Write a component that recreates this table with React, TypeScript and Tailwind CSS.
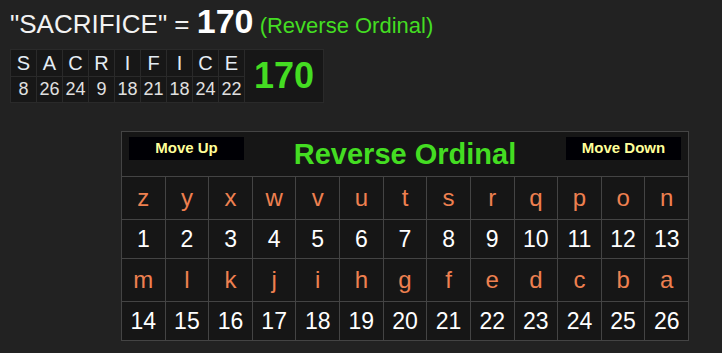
import React from 'react';

const word = [
  { ch: 'S', v: 8 },
  { ch: 'A', v: 26 },
  { ch: 'C', v: 24 },
  { ch: 'R', v: 9 },
  { ch: 'I', v: 18 },
  { ch: 'F', v: 21 },
  { ch: 'I', v: 18 },
  { ch: 'C', v: 24 },
  { ch: 'E', v: 22 },
];

const alphabet = 'zyxwvutsrqponmlkjihgfedcba'.split('');

// two halves of the cipher chart, 13 letters each
const halves = [alphabet.slice(0, 13), alphabet.slice(13)];

const App = () => {
  return (
    <div
      className="min-h-screen w-full bg-[#222222] px-[10px] pt-[3px] text-white"
      style={{ fontFamily: '"Liberation Sans", Arial, sans-serif' }}
    >
      {/* heading */}
      <div className="flex h-[36px] items-baseline whitespace-pre leading-[36px]">
        <span className="text-[26px] text-[#f2f2f2]">"SACRIFICE" = </span>
        <span className="text-[34px] font-bold">170</span>
        <span className="text-[22px] text-[#44dd22]"> (Reverse Ordinal)</span>
      </div>

      {/* word breakdown */}
      <div className="mt-[10px] grid w-fit grid-flow-col grid-cols-[repeat(9,25px)_78px] grid-rows-[26px_25px] gap-px bg-[#2a2a2a] p-px">
        {word.map((w, i) => (
          <React.Fragment key={i}>
            <div className="flex items-center justify-center bg-[#171717] text-[20px] text-[#e4ecf4]">
              {w.ch}
            </div>
            <div className="flex items-center justify-center bg-[#171717] text-[18px] text-[#e0e0e0]">
              {w.v}
            </div>
          </React.Fragment>
        ))}
        <div className="row-span-2 flex items-center justify-center bg-[#171717] text-[36px] font-bold text-[#44dd22]">
          170
        </div>
      </div>

      {/* cipher chart */}
      <div className="ml-[111px] mt-[28px] grid w-[568px] grid-cols-[repeat(13,minmax(0,1fr))] gap-px bg-[#444444] p-px">
        <div className="col-span-13 flex h-[44px] items-start justify-between bg-[#161616] px-[7px] pt-[5px]">
          <button className="flex h-[23px] w-[115px] items-center justify-center bg-[#000005] text-[15px] font-bold text-[#ffff99]">
            Move Up
          </button>
          <div className="mt-[-3px] text-[29px] font-bold leading-[40px] text-[#44dd22]">Reverse Ordinal</div>
          <button className="flex h-[23px] w-[115px] items-center justify-center bg-[#000005] text-[15px] font-bold text-[#ffff99]">
            Move Down
          </button>
        </div>
        {halves.map((row, r) => (
          <React.Fragment key={r}>
            {row.map((l) => (
              <div
                key={l}
                className="flex h-[42px] items-center justify-center bg-[#161616] text-[24px] text-[#ee8050]"
              >
                {l}
              </div>
            ))}
            {row.map((l, i) => (
              <div
                key={l + 'n'}
                className="flex h-[38px] items-center justify-center bg-[#161616] text-[23px] text-white"
              >
                {r * 13 + i + 1}
              </div>
            ))}
          </React.Fragment>
        ))}
      </div>
    </div>
  );
};

export default App;
